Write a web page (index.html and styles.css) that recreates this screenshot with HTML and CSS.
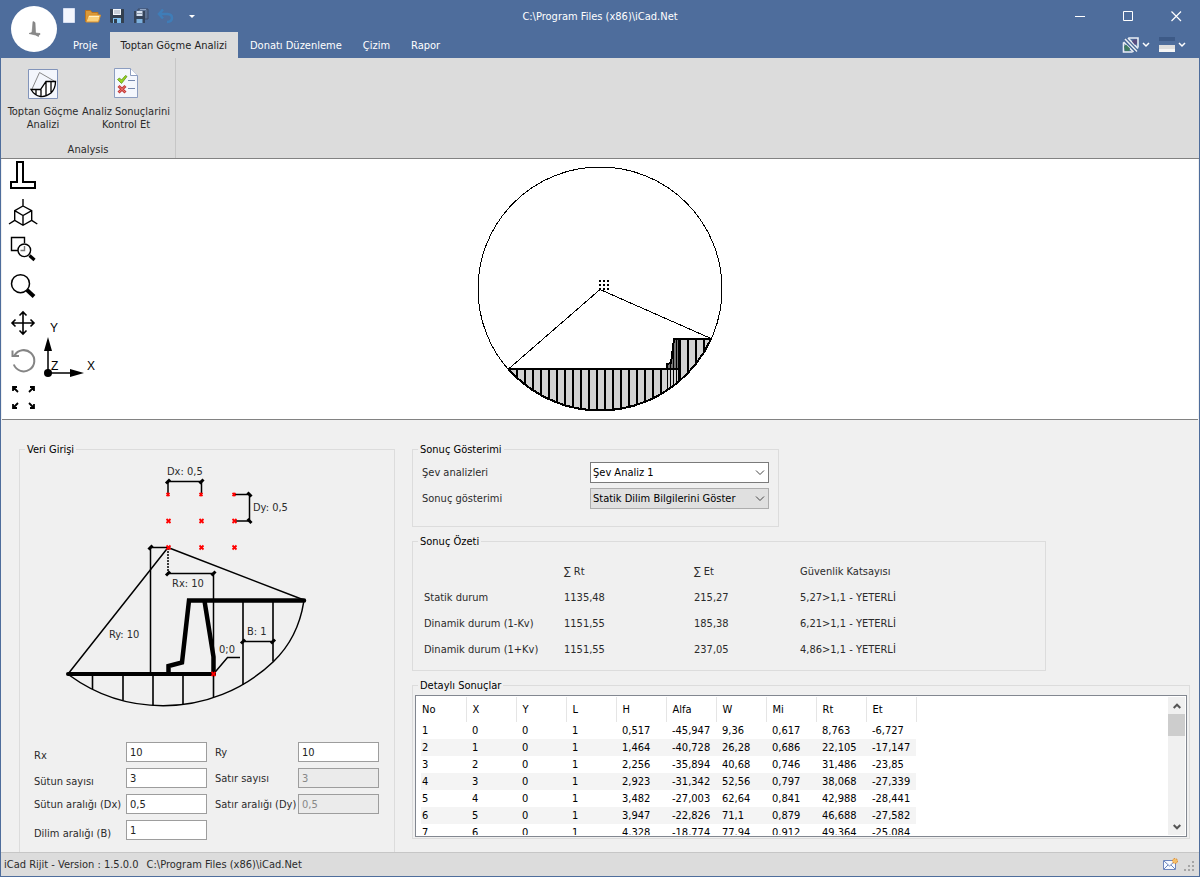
FILE: index.html
```html
<!DOCTYPE html>
<html lang="tr">
<head>
<meta charset="utf-8">
<title>iCad.Net</title>
<link rel="stylesheet" href="styles.css">
</head>
<body>
<header class="titlebar">
  <button class="app-logo" aria-label="iCad">
    <svg width="46" height="46" viewBox="11 6 46 46"><path d="M33 21.500L35 22.500L35.500 33L40 33.500V34.500L38.500 35V36.500L35.500 35L29 33.500L32 32.500L32.500 28Z" fill="#8a8a8a" stroke="#777" stroke-width=".6"/></svg>
  </button>
  <div class="caption-row">
    <div class="quick">
      <button aria-label="Yeni"><svg viewBox="57 4 24 24"><path d="M63.500 8.500h11v14h-11z" fill="#f3f6fd" stroke="#d5def2"/></svg></button>
      <button aria-label="Aç"><svg viewBox="81 4 24 24"><path d="M85.500 21.500V10.500h5l1.500 2h6v3" fill="#d99a3a" stroke="#b8731f"/><path d="M86 22l2.500-7h12l-2 7z" fill="#fbd27d" stroke="#d98f2c"/><path d="M89 16.500h10" stroke="#fff0c5"/></svg></button>
      <button aria-label="Kaydet"><svg viewBox="105 4 24 24"><path d="M110 9h14v14h-13l-1-1z" fill="#33404f"/><path d="M113 9h8v6h-8z" fill="#f4f7fb"/><path d="M114 11h6M114 13h6" stroke="#9aa7b5"/><path d="M113 18h8v5h-8z" fill="#7fc0ee"/><path d="M114 19h3v4h-3z" fill="#33404f"/></svg></button>
      <button aria-label="Tümünü kaydet"><svg viewBox="129 4 24 24"><path d="M138 9h10v10h-10z" fill="#5b7091" stroke="#3c4d68"/><path d="M140 9.500h6" stroke="#8fa3c2"/><path d="M134 11h11v12h-11z" fill="#34435a"/><path d="M136.500 11h6v5h-6z" fill="#d6e1f0"/><path d="M137 13.500h5" stroke="#8796ab"/><path d="M136.500 19h6v4h-6z" fill="#7cb0dc"/></svg></button>
      <button aria-label="Geri al"><svg viewBox="153 4 24 24"><path d="M163 9.500l-4 4.500l4 4.500M159.500 14h8q4.500.3 4.500 4t-5 4" fill="none" stroke="#3f7db8" stroke-width="2.500"/></svg></button>
      <button aria-label="Özelleştir"><svg viewBox="180 4 24 24"><path d="M189 15h6l-3 3z" fill="#fff"/></svg></button>
    </div>
    <h1 class="title">C:\Program Files (x86)\iCad.Net</h1>
    <div class="window-buttons">
      <button aria-label="Simge durumuna küçült"><svg viewBox="1068 4 24 24"><path d="M1075 16.500h10" stroke="#fff"/></svg></button>
      <button aria-label="Ekranı kapla"><svg viewBox="1116 4 24 24"><path d="M1123.500 11.500h9v9h-9z" fill="none" stroke="#fff"/></svg></button>
      <button aria-label="Kapat"><svg viewBox="1164 4 24 24"><path d="M1171.500 11.500l9.500 9.500M1181 11.500l-9.500 9.500" stroke="#fff" stroke-width="1.200"/></svg></button>
    </div>
  </div>
  <div class="tab-row">
    <nav class="tabs">
      <button>Proje</button>
      <button class="active">Toptan Göçme Analizi</button>
      <button>Donatı Düzenleme</button>
      <button>Çizim</button>
      <button>Rapor</button>
    </nav>
    <div class="skin-buttons">
      <button aria-label="Görünüm"><svg width="30" height="20" viewBox="1121 35 30 20"><path d="M1124.500 38l2.500 1 2 3 9 8.500-1 1.500h-2l-1-1.500-9-9.500z" fill="#3f5f8d"/><path d="M1123.500 42.500v9.500h9M1138 47.500V38h-9.500" fill="none" stroke="#e9edf3" stroke-width="1.600"/><path d="M1125 39l12 12.500M1128 38l10 10.500M1123.500 42l10 10" stroke="#e9edf3" stroke-width="1.600"/><path d="M1132 41.500l2-2h3v4l-2 1.500z" fill="#594d80"/><path d="M1124 46.500l2-2 4 4-1 2.500h-4z" fill="#3f7a61"/><path d="M1143 43l3 3l3-3" fill="none" stroke="#fff" stroke-width="1.500"/></svg></button>
      <button aria-label="Tema"><svg width="30" height="20" viewBox="1157 35 30 20"><path d="M1159 37h16v4h-16z" fill="#3d5a87"/><path d="M1159 45h16v7h-16z" fill="#dedede"/><path d="M1159 49h16v3h-16z" fill="#f5f5f5"/><path d="M1179 43l3 3l3-3" fill="none" stroke="#fff" stroke-width="1.500"/></svg></button>
    </div>
  </div>
</header>

<section class="ribbon">
  <div class="ribbon-group">
    <div class="ribbon-items">
      <button class="slip-button"><svg width="34" height="34" viewBox="26 67 34 34"><path d="M28.500 69.500h29v29h-29z" fill="#f3f6fc" stroke="#8294ba"/><path d="M32 89L39.500 72.500L55 81.500" fill="none" stroke="#888"/><path d="M31 89.500h9.500L46 81.500h9.500q0 7-4.500 11.500q-5 4-10.500 3.500q-6-1-9.500-7zM36 89.500v5M41 89.500v7M46 81.500v15M51 81.500v11" fill="#fff" stroke="#000" stroke-width="1.300"/></svg><span>Toptan Göçme<br>Analizi</span></button>
      <button class="check-button"><svg width="34" height="34" viewBox="110 67 34 34"><path d="M115.500 68.500h16l7 7v22h-23z" fill="#f4f7fd" stroke="#8c9dc0"/><path d="M131.500 68.500v7h7" fill="#fff" stroke="#8c9dc0"/><path d="M129 80.500h7M129 88.500h7" stroke="#7487ad" stroke-width="1.200"/><path d="M118.500 79.500l2 -1.500l2 2l4-4.500l1.500 1-5.500 7z" fill="#9ad51f" stroke="#5c931a" stroke-width=".8"/><path d="M119.500 86l7 6.500M126.500 86l-7 6.500" stroke="#c43a38" stroke-width="3"/><path d="M120 86.500l6 5.500M126 86.500l-6 5.500" stroke="#ed7770"/></svg><span>Analiz Sonuçlarini<br>Kontrol Et</span></button>
    </div>
    <div class="ribbon-caption">Analysis</div>
  </div>
</section>

<section class="canvas">
  <div class="tools">
    <button aria-label="Duvar"><svg viewBox="5 159 36 37"><path d="M17 162H23V182H35V188H11V182H17Z"/></svg></button>
    <button aria-label="İzometrik"><svg viewBox="5 196 36 37" class="thin"><path d="M23 199v7M23 206l8.700 4.700v9.600L23 225.300l-8.300-5v-9.600zM14.700 210.700L23 215.500l8.700-4.800M23 215.500v9.800M14.700 220.300L9 224M31.700 220.300L37.300 224"/></svg></button>
    <button aria-label="Pencere yakınlaştır"><svg viewBox="5 233 36 37" class="thin"><path d="M18 250.500H11.500V237.500H24.500V243"/><path d="M24.500 246v4.500h-4" stroke="#777"/><circle cx="24.300" cy="250.300" r="6.300"/><path d="M29.500 255.500l5 4.500" stroke-width="3.200"/></svg></button>
    <button aria-label="Yakınlaştır"><svg viewBox="5 270 36 37"><circle cx="20.500" cy="283.700" r="9" stroke-width="1.500"/><path d="M27 290l7 6.500" stroke-width="4"/></svg></button>
    <button aria-label="Kaydır"><svg viewBox="5 307 36 37"><path d="M23 312v22M12 323h22M19.500 315.500l3.500-3.500 3.500 3.500M19.500 330.500l3.500 3.500 3.500-3.500M15.500 319.500l-3.500 3.500 3.500 3.500M30.500 319.500l3.500 3.500-3.500 3.500" stroke-width="1.600"/></svg></button>
    <button aria-label="Döndür"><svg viewBox="5 344 36 37"><path d="M13.800 364.500A10.600 10.600 0 1 0 14.500 355.500M12.500 350.500v5.500h6.500" stroke="#858585" stroke-width="2"/></svg></button>
    <button aria-label="Sığdır"><svg viewBox="5 381 36 37"><path d="M13 391v-4h4M13 387l5 5M30 387h4v4M34 387l-5 5M13 404v4h4M13 408l5-5M30 408h4v-4M34 408l-5-5" stroke-width="1.800"/></svg></button>
  </div>
  <svg class="axis" width="60" height="220" viewBox="42 159 60 220">
    <path d="M48 373V350M48 373H70" stroke="#000" stroke-width="1.500"/><circle cx="48" cy="373" r="4"/><path d="M48 337l-4 14h8zM84 373l-14-4v8z"/>
    <text x="50" y="332">Y</text><text x="87" y="370">X</text><text x="51" y="370">Z</text>
  </svg>
  <svg class="slip" width="260" height="260" viewBox="470 159 260 260" shape-rendering="crispEdges">
    <defs><clipPath id="below"><path d="M508.500 369H667V364L671 363L674 339H711.500A122 122 0 0 1 508.500 369Z"/></clipPath></defs>
    <circle cx="600" cy="289" r="122" fill="none" stroke="#000"/>
    <path d="M508.500 369L600 289.500L711 338.500" fill="none" stroke="#000"/>
    <g clip-path="url(#below)">
      <path d="M500 330h220v90H500z" fill="#d3d3d3"/>
      <path d="M667 369V364L671 363L674 339H678L680 369Z" fill="#777"/>
      <path d="M517 369v60M525 369v60M533 369v60M541 369v60M549 369v60M557 369v60M565 369v60M573 369v60M581 369v60M589 369v60M597 369v60M605 369v60M613 369v60M621 369v60M629 369v60M637 369v60M645 369v60M653 369v60M661 369v60M688 339v60M696 339v60M704 339v60" stroke="#000" stroke-width="2"/>
      <path d="M667 364v60M670 364v60M673 345v60M676 339v60" stroke="#000"/>
      <path d="M679.500 339v60" stroke="#000" stroke-width="3"/>
    </g>
    <path d="M508.500 369H679M667 369V364L671 363L674 339H711A122 122 0 0 1 508.500 369" fill="none" stroke="#000" stroke-width="2"/>
    <path d="M599 281h2M603 281h2M607 281h2M599 285h2M603 285h2M607 285h2M599 289h2M603 289h2M607 289h2" stroke="#000" stroke-width="2"/>
  </svg>
</section>

<main class="workspace">
  <fieldset class="inputs">
    <legend>Veri Girişi</legend>
    <svg class="diagram" width="374" height="270" viewBox="20 456 374 270">
      <g fill="none" stroke="#000">
        <path d="M168 547.500L68 674M168 547.500L304 600" stroke-width="1.500"/>
        <path d="M69 675A159 159 0 0 0 163 705.700A159 159 0 0 0 273.300 661.700Q298 638 303.700 602" stroke-width="1.500"/>
        <path d="M92.500 674v15M123 674v26.500M153 674v31.500M183 674v30.500M213.500 674v23M243 600v85M273 600v61.500" stroke-width="1.600"/>
        <path d="M168 494v-12.500h33.500V494M234 494.500h15.500V521H234M168 547.500h-17.500V674M168 573.500h45.500V674M243 641.500h30M213.500 674l14-16.500H240" stroke-width="1.500"/>
        <path d="M168 548v26" stroke-width="1.500" stroke-dasharray="2 1"/>
        <path d="M166 483.500l4-4M199.500 483.500l4-4M247.500 492.500l4 4M247.500 519l4 4M148.500 549.500l4-4M166 575.500l4-4M211.500 575.500l4-4M241 643.500l4-4M271 643.500l4-4" stroke-width="3"/>
        <path d="M68 674H214" stroke-width="4" stroke-linecap="round"/>
        <path d="M168.500 673V666L182 662.500L189 600.500H304M204.500 601L213.500 657V674" stroke-width="4.500" stroke-linecap="round"/>
        <path d="M166.500 493l3 3m0-3l-3 3M199.500 493l3 3m0-3l-3 3M232.500 493l3 3m0-3l-3 3M166.500 519l4 4m0-4l-4 4M199.500 519l4 4m0-4l-4 4M232.500 519l4 4m0-4l-4 4M166.500 545.500l4 4m0-4l-4 4M199.500 545.500l4 4m0-4l-4 4M232.500 545.500l4 4m0-4l-4 4M211.500 672l4 4m0-4l-4 4" stroke="red" stroke-width="1.800"/>
      </g>
      <text x="167" y="475">Dx: 0,5</text><text x="253" y="511">Dy: 0,5</text><text x="172" y="587">Rx: 10</text><text x="109" y="638">Ry: 10</text><text x="247" y="635">B: 1</text><text x="219" y="653">0;0</text>
    </svg>
    <div class="form">
      <label class="low" for="rx">Rx</label><input id="rx" value="10">
      <label class="second" for="ry">Ry</label><input id="ry" value="10">
      <label class="low" for="cols">Sütun sayısı</label><input id="cols" value="3">
      <label class="second" for="rows">Satır sayısı</label><input id="rows" value="3" disabled>
      <label for="dx">Sütun aralığı (Dx)</label><input id="dx" value="0,5">
      <label class="second" for="dy">Satır aralığı (Dy)</label><input id="dy" value="0,5" disabled>
      <label class="low" for="slice">Dilim aralığı (B)</label><input id="slice" value="1">
    </div>
  </fieldset>

  <div class="results">
    <fieldset class="choice">
      <legend>Sonuç Gösterimi</legend>
      <div class="choice-grid">
        <label for="slope">Şev analizleri</label>
        <span class="combo"><select id="slope"><option>Şev Analiz 1</option></select><svg width="10" height="6"><path d="M1 .5l4 4 4-4"/></svg></span>
        <label for="view">Sonuç gösterimi</label>
        <span class="combo"><select id="view" class="flat"><option>Statik Dilim Bilgilerini Göster</option></select><svg width="10" height="6"><path d="M1 .5l4 4 4-4"/></svg></span>
      </div>
    </fieldset>

    <fieldset class="summary">
      <legend>Sonuç Özeti</legend>
      <table>
        <colgroup><col class="c-name"><col class="c-rt"><col class="c-et"><col></colgroup>
        <tr><th></th><th>∑ Rt</th><th>∑ Et</th><th>Güvenlik Katsayısı</th></tr>
        <tr><th>Statik durum</th><td>1135,48</td><td>215,27</td><td>5,27&gt;1,1 - YETERLİ</td></tr>
        <tr><th>Dinamik durum (1-Kv)</th><td>1151,55</td><td>185,38</td><td>6,21&gt;1,1 - YETERLİ</td></tr>
        <tr><th>Dinamik durum (1+Kv)</th><td>1151,55</td><td>237,05</td><td>4,86&gt;1,1 - YETERLİ</td></tr>
      </table>
    </fieldset>

    <fieldset class="details">
      <legend>Detaylı Sonuçlar</legend>
      <div class="list">
        <div class="list-body">
          <table>
            <thead><tr><th>No</th><th>X</th><th>Y</th><th>L</th><th>H</th><th>Alfa</th><th>W</th><th>Mi</th><th>Rt</th><th>Et</th></tr></thead>
            <tbody>
              <tr><td>1</td><td>0</td><td>0</td><td>1</td><td>0,517</td><td>-45,947</td><td>9,36</td><td>0,617</td><td>8,763</td><td>-6,727</td></tr>
              <tr><td>2</td><td>1</td><td>0</td><td>1</td><td>1,464</td><td>-40,728</td><td>26,28</td><td>0,686</td><td>22,105</td><td>-17,147</td></tr>
              <tr><td>3</td><td>2</td><td>0</td><td>1</td><td>2,256</td><td>-35,894</td><td>40,68</td><td>0,746</td><td>31,486</td><td>-23,85</td></tr>
              <tr><td>4</td><td>3</td><td>0</td><td>1</td><td>2,923</td><td>-31,342</td><td>52,56</td><td>0,797</td><td>38,068</td><td>-27,339</td></tr>
              <tr><td>5</td><td>4</td><td>0</td><td>1</td><td>3,482</td><td>-27,003</td><td>62,64</td><td>0,841</td><td>42,988</td><td>-28,441</td></tr>
              <tr><td>6</td><td>5</td><td>0</td><td>1</td><td>3,947</td><td>-22,826</td><td>71,1</td><td>0,879</td><td>46,688</td><td>-27,582</td></tr>
              <tr><td>7</td><td>6</td><td>0</td><td>1</td><td>4,328</td><td>-18,774</td><td>77,94</td><td>0,912</td><td>49,364</td><td>-25,084</td></tr>
            </tbody>
          </table>
        </div>
        <div class="scrollbar">
          <button aria-label="Yukarı"><svg width="8" height="6"><path d="M.7 5l3.300-3.300L7.300 5"/></svg></button>
          <div class="track"><div class="thumb"></div></div>
          <button aria-label="Aşağı"><svg width="8" height="6"><path d="M.7 1l3.300 3.300L7.300 1"/></svg></button>
        </div>
      </div>
    </fieldset>
  </div>
</main>

<footer class="status">
  <span>iCad Rijit - Version : 1.5.0.0</span>
  <span>C:\Program Files (x86)\iCad.Net</span>
  <svg width="34" height="20" viewBox="1162 855 34 20"><path d="M1163.500 860.500h12v9h-12z" fill="#f7faff" stroke="#6d86bd"/><path d="M1164 861l5.500 5 5.500-5M1164 869l4-4M1175 869l-4-4" fill="none" stroke="#6d86bd"/><circle cx="1175" cy="861" r="2.500" fill="#f6c067" stroke="#d9822b" stroke-dasharray="1.500 1"/><path d="M1192 861h2v2h-2zM1188 865h2v2h-2zM1192 865h2v2h-2zM1184 869h2v2h-2zM1188 869h2v2h-2zM1192 869h2v2h-2z" fill="#a5a5a5"/></svg>
</footer>
</body>
</html>
```

FILE: styles.css
```css
* { box-sizing: border-box; }

body {
  margin: 0;
  min-height: 100vh;
  display: flex;
  flex-direction: column;
  font: 11px/13px Tahoma, "DejaVu Sans Condensed", "Noto Sans", sans-serif;
  color: #2b2b2b;
  background: #f0f0f0;
  border: solid #4e6d9c;
  border-width: 0 1px 1px;
}

button {
  font: inherit;
  color: inherit;
  border: 0;
  padding: 0;
  background: none;
}

svg { display: block; }
h1 { margin: 0; font: inherit; }

/* Title bar and tabs */
.titlebar {
  display: grid;
  grid-template-columns: 64px 1fr;
  grid-template-rows: 32px 26px;
  margin: 0 -1px;
  background: #4e6d9c;
  color: #fff;
}
.app-logo {
  grid-row: 1 / 3;
  align-self: center;
  margin-left: 11px;
  width: 46px;
  height: 46px;
  border-radius: 50%;
  background: #fff;
}
.caption-row {
  display: grid;
  grid-template-columns: 1fr auto 1fr;
  align-items: center;
  margin-left: -64px;
}
.quick { display: flex; padding-left: 57px; }
.quick svg { width: 24px; height: 24px; }
.quick button:last-child { margin-left: 3px; }
.window-buttons { display: flex; justify-content: flex-end; }
.window-buttons button { width: 48px; display: flex; justify-content: center; }
.window-buttons svg { width: 24px; height: 24px; }
.tab-row { display: flex; justify-content: space-between; }
.tabs { display: flex; gap: 3px; }
.tabs button { padding: 0 9px; }
.tabs .active { padding: 0 11px; background: #dcdcdc; color: #222; }
.skin-buttons { display: flex; gap: 6px; align-items: center; padding-right: 13px; }

/* Ribbon */
.ribbon {
  display: flex;
  background: #dcdcdc;
  border-bottom: 1px solid #828282;
}
.ribbon-group { padding: 9px 8px 2px; border-right: 1px solid #c6c6c6; }
.ribbon-items { display: flex; gap: 8px; }
.ribbon-items button {
  display: flex;
  flex-direction: column;
  align-items: center;
  gap: 4px;
  white-space: nowrap;
}
.slip-button { width: 68px; }
.check-button { width: 82px; }
.ribbon-caption { text-align: center; padding-top: 12px; }

/* Drawing area */
.canvas {
  display: grid;
  grid-template-columns: 100px 1fr 100px;
  margin: 0 1px;
  background: #fff;
  border-bottom: 1px solid #828282;
}
.tools, .axis { grid-area: 1 / 1; }
.tools { padding-left: 3px; }
.tools button { display: block; }
.tools svg { width: 36px; height: 37px; fill: none; stroke: #000; stroke-width: 2; }
.tools .thin { stroke-width: 1.4; }
.axis { margin-left: 40px; }
.axis text { font: 12px "Liberation Sans", sans-serif; }
.slip { justify-self: center; }

/* Workspace */
.workspace {
  flex: 1;
  display: grid;
  grid-template-columns: 376px 1fr;
  gap: 17px;
  padding: 23px 9px 0 18px;
}
fieldset {
  margin: 0;
  padding: 0;
  min-width: 0;
  border: 1px solid #dcdcdc;
}
legend { margin-left: 5px; padding: 0 2px; color: #000; }

.inputs { border-bottom: 0; }
.diagram text { font-size: 11px; fill: #2b2b2b; }
.form {
  display: grid;
  grid-template-columns: 92px 81px 91px 81px;
  grid-auto-rows: 20px;
  row-gap: 6px;
  align-items: center;
  padding: 16px 0 12px 14px;
  white-space: nowrap;
}
.form .second { padding-left: 8px; }
.form .low { align-self: end; }
.form input {
  width: 100%;
  height: 20px;
  padding: 0 3px;
  font: inherit;
  color: #222;
  background: #fff;
  border: 1px solid #9d9d9d;
}
.form input:disabled { background: #ebebeb; color: #888; }

.results { display: grid; gap: 8px; align-content: start; }
.choice { width: 367px; }
.choice-grid {
  display: grid;
  grid-template-columns: 168px 179px;
  grid-auto-rows: 21px;
  row-gap: 5px;
  align-items: center;
  padding: 6px 9px 17px;
}
.combo { position: relative; }
.combo select {
  display: block;
  appearance: none;
  width: 100%;
  height: 21px;
  padding: 0 2px;
  font: inherit;
  color: #000;
  background: #fff;
  border: 1px solid #7a7a7a;
  border-radius: 0;
}
.combo .flat { background: #e0e0e0; border-color: #adadad; }
.combo svg { position: absolute; right: 4px; top: 8px; fill: none; stroke: #444; pointer-events: none; }

table { border-collapse: collapse; table-layout: fixed; }
th, td { padding: 0; font-weight: normal; text-align: left; white-space: nowrap; }

.summary { width: 634px; }
.summary table { width: 600px; margin: 10px 0 8px 11px; }
.summary tr { height: 26px; }
.c-name { width: 140px; }
.c-rt { width: 130px; }
.c-et { width: 106px; }

.list {
  display: flex;
  height: 142px;
  margin: 3px 2px 1px;
  padding: 1px;
  background: #fff;
  border: 1px solid #828790;
  color: #000;
}
.list-body { flex: 1; overflow: hidden; padding-left: 4px; }
.list table { width: 495px; }
.list th, .list td { width: 50px; padding-left: 6px; }
.list th:first-child, .list td:first-child { width: 45px; padding-left: 1px; }
.list th { height: 25px; border-right: 1px solid #e5e5e5; }
.list tbody tr { height: 17px; }
.list tbody tr:nth-child(even) { background: #f4f4f4; }
.scrollbar { width: 17px; display: flex; flex-direction: column; background: #f0f0f0; }
.scrollbar button { height: 17px; display: flex; align-items: center; justify-content: center; }
.scrollbar svg { fill: none; stroke: #555; stroke-width: 2; }
.track { flex: 1; }
.thumb { height: 22px; background: #cdcdcd; }

/* Status bar */
.status {
  display: flex;
  align-items: center;
  gap: 8px;
  height: 24px;
  padding: 0 3px;
  background: #dcdcdc;
  border-top: 1px solid #c6c6c6;
}
.status svg { margin-left: auto; }
```
